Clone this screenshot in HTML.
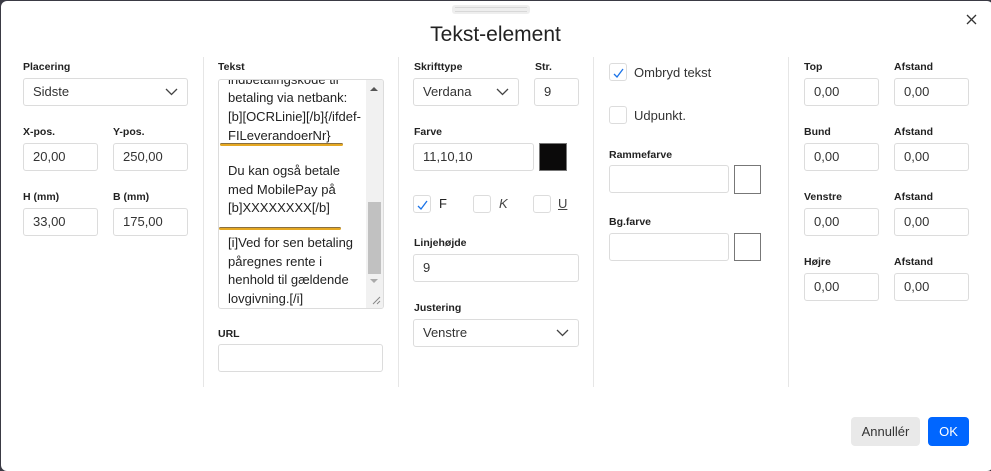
<!DOCTYPE html>
<html><head><meta charset="utf-8"><style>
*{box-sizing:border-box;margin:0;padding:0}
body{width:991px;height:468px;background:#3a3a44;font-family:"Liberation Sans",Arial,sans-serif;color:#222;overflow:hidden;position:relative}
#d{position:absolute;left:1px;top:1px;width:992px;height:470px;background:#fff;border-radius:6px}
.a{position:absolute}
.l{position:absolute;font-size:10.5px;font-weight:bold;color:#222}
.i{position:absolute;border:1px solid #dcdcdc;border-radius:3px;height:28px;font-size:13px;color:#333;padding-left:9px;line-height:26px;background:#fff}
.chev{position:absolute;right:9px;top:9px}
.v{position:absolute;top:57px;width:1px;height:330px;background:#e6e6e6}
.cb{position:absolute;width:18px;height:18px;border:1px solid #dcdcdc;border-radius:3px}
.sw{position:absolute;border:1px solid #777}
.ta{position:absolute;left:218px;top:79px;width:166px;height:230px;border:1px solid #dcdcdc;border-radius:3px;overflow:hidden}
.tl{position:absolute;left:9px;font-size:13px;color:#222;white-space:nowrap}
.or{position:absolute;height:3px;background:#e5a823;border-radius:2px;border-top:1px solid #8a7040}
</style></head><body>
<div id="d"></div>
<div class="a" style="left:452px;top:5px;width:78px;height:9px;background:#eee;border-radius:3px"></div>
<div class="a" style="left:455px;top:7px;width:72px;height:1px;background:#d8d8d8"></div>
<div class="a" style="left:455px;top:11px;width:72px;height:1px;background:#d8d8d8"></div>
<div class="a" style="left:0;top:23px;width:991px;text-align:center;font-size:21px;color:#222">Tekst-element</div>
<svg class="a" style="left:966px;top:14px" width="11" height="11"><path d="M1 1L10 10M10 1L1 10" stroke="#333" stroke-width="1.3"/></svg>
<div class="v" style="left:203px"></div><div class="v" style="left:398px"></div><div class="v" style="left:593px"></div><div class="v" style="left:788px"></div>

<div class="l" style="left:23px;top:61px">Placering</div>
<div class="i" style="left:23px;top:78px;width:165px">Sidste<svg class="chev" width="13" height="8"><path d="M1 1L6.5 6.5L12 1" fill="none" stroke="#444" stroke-width="1.3"/></svg></div>
<div class="l" style="left:23px;top:126px">X-pos.</div><div class="l" style="left:113px;top:126px">Y-pos.</div>
<div class="i" style="left:23px;top:143px;width:75px">20,00</div><div class="i" style="left:113px;top:143px;width:75px">250,00</div>
<div class="l" style="left:23px;top:191px">H (mm)</div><div class="l" style="left:113px;top:191px">B (mm)</div>
<div class="i" style="left:23px;top:208px;width:75px">33,00</div><div class="i" style="left:113px;top:208px;width:75px">175,00</div>

<div class="l" style="left:218px;top:61px">Tekst</div>
<div class="ta">
<div class="tl" style="top:-8px">indbetalingskode til</div>
<div class="tl" style="top:10px">betaling via netbank:</div>
<div class="tl" style="top:29px">[b][OCRLinie][/b]{/ifdef-</div>
<div class="tl" style="top:48px">FILeverandoerNr}</div>
<div class="or" style="left:1px;top:63px;width:123px"></div>
<div class="tl" style="top:83px">Du kan også betale</div>
<div class="tl" style="top:102px">med MobilePay på</div>
<div class="tl" style="top:120px">[b]XXXXXXXX[/b]</div>
<div class="or" style="left:0;top:147px;width:122px"></div>
<div class="tl" style="top:155px">[i]Ved for sen betaling</div>
<div class="tl" style="top:174px">påregnes rente i</div>
<div class="tl" style="top:192px">henhold til gældende</div>
<div class="tl" style="top:211px">lovgivning.[/i]</div>
<div class="a" style="left:147px;top:0;width:17px;height:228px;background:#f1f1f1"></div>
<div class="a" style="left:149px;top:122px;width:13px;height:72px;background:#c1c1c1"></div>
<svg class="a" style="left:150px;top:6px" width="10" height="6"><path d="M1 5L5 1L9 5Z" fill="#555"/></svg>
<svg class="a" style="left:150px;top:198px" width="10" height="6"><path d="M1 1L5 5L9 1Z" fill="#aaa"/></svg>
<svg class="a" style="left:152px;top:215px" width="10" height="10"><path d="M9 2L2 9M9 6L6 9" stroke="#888"/></svg>
</div>
<div class="l" style="left:218px;top:328px">URL</div>
<div class="i" style="left:218px;top:344px;width:165px"></div>

<div class="l" style="left:414px;top:61px">Skrifttype</div><div class="l" style="left:535px;top:61px">Str.</div>
<div class="i" style="left:413px;top:78px;width:106px">Verdana<svg class="chev" width="13" height="8"><path d="M1 1L6.5 6.5L12 1" fill="none" stroke="#444" stroke-width="1.3"/></svg></div>
<div class="i" style="left:534px;top:78px;width:45px">9</div>
<div class="l" style="left:414px;top:126px">Farve</div>
<div class="i" style="left:413px;top:143px;width:121px">11,10,10</div>
<div class="sw" style="left:539px;top:143px;width:28px;height:28px;background:#0b0a0a"></div>
<div class="cb" style="left:413px;top:195px"><svg class="a" style="left:3px;top:4px" width="11" height="10"><path d="M1 6L4 9L10 1" fill="none" stroke="#1a73e8" stroke-width="1.3"/></svg></div>
<div class="a" style="left:439px;top:196px;font-size:13px">F</div>
<div class="cb" style="left:473px;top:195px"></div><div class="a" style="left:499px;top:196px;font-size:13px;font-style:italic;color:#444">K</div>
<div class="cb" style="left:533px;top:195px"></div><div class="a" style="left:558px;top:196px;font-size:13px;text-decoration:underline;color:#444">U</div>
<div class="l" style="left:414px;top:237px">Linjehøjde</div>
<div class="i" style="left:413px;top:254px;width:166px">9</div>
<div class="l" style="left:414px;top:302px">Justering</div>
<div class="i" style="left:413px;top:319px;width:166px">Venstre<svg class="chev" width="13" height="8"><path d="M1 1L6.5 6.5L12 1" fill="none" stroke="#444" stroke-width="1.3"/></svg></div>

<div class="cb" style="left:609px;top:63px"><svg class="a" style="left:3px;top:4px" width="11" height="10"><path d="M1 6L4 9L10 1" fill="none" stroke="#1a73e8" stroke-width="1.3"/></svg></div>
<div class="a" style="left:634px;top:65px;font-size:13px;color:#333">Ombryd tekst</div>
<div class="cb" style="left:609px;top:106px"></div>
<div class="a" style="left:634px;top:108px;font-size:13px;color:#333">Udpunkt.</div>
<div class="l" style="left:609px;top:149px">Rammefarve</div>
<div class="i" style="left:609px;top:165px;width:120px"></div>
<div class="sw" style="left:734px;top:165px;width:27px;height:29px;background:#fff"></div>
<div class="l" style="left:609px;top:216px">Bg.farve</div>
<div class="i" style="left:609px;top:233px;width:120px"></div>
<div class="sw" style="left:734px;top:233px;width:27px;height:28px;background:#fff"></div>

<div class="l" style="left:804px;top:61px">Top</div><div class="l" style="left:894px;top:61px">Afstand</div>
<div class="i" style="left:804px;top:78px;width:75px">0,00</div><div class="i" style="left:894px;top:78px;width:75px">0,00</div>
<div class="l" style="left:804px;top:126px">Bund</div><div class="l" style="left:894px;top:126px">Afstand</div>
<div class="i" style="left:804px;top:143px;width:75px">0,00</div><div class="i" style="left:894px;top:143px;width:75px">0,00</div>
<div class="l" style="left:804px;top:191px">Venstre</div><div class="l" style="left:894px;top:191px">Afstand</div>
<div class="i" style="left:804px;top:208px;width:75px">0,00</div><div class="i" style="left:894px;top:208px;width:75px">0,00</div>
<div class="l" style="left:804px;top:256px">Højre</div><div class="l" style="left:894px;top:256px">Afstand</div>
<div class="i" style="left:804px;top:273px;width:75px">0,00</div><div class="i" style="left:894px;top:273px;width:75px">0,00</div>

<div class="a" style="left:851px;top:417px;width:69px;height:29px;background:#e9e9e9;border-radius:4px;font-size:13px;color:#333;text-align:center;line-height:29px">Annullér</div>
<div class="a" style="left:928px;top:417px;width:41px;height:29px;background:#0066ff;border-radius:4px;font-size:13px;color:#fff;text-align:center;line-height:29px">OK</div>
</body></html>
